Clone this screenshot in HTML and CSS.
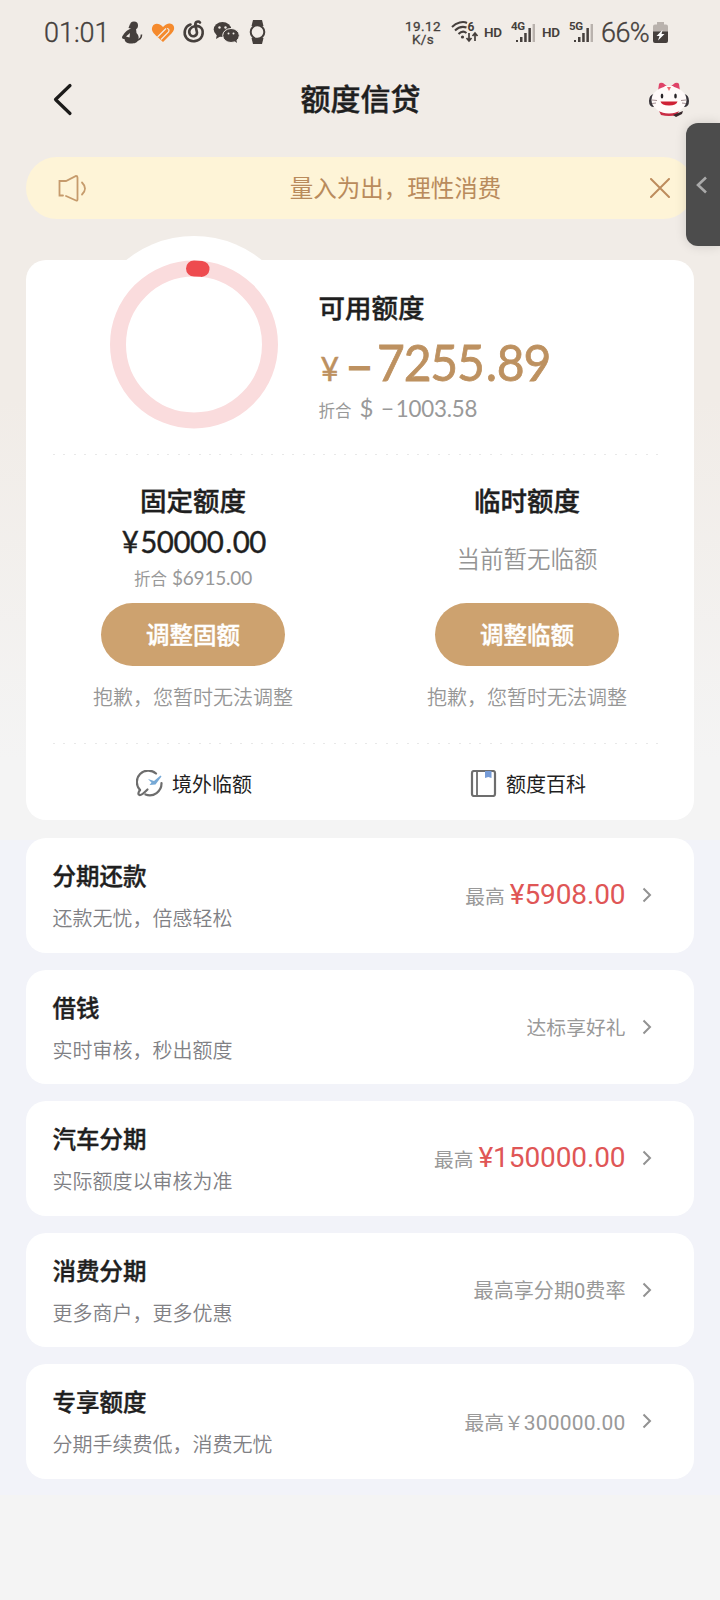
FILE: index.html
```html
<!DOCTYPE html>
<html lang="zh-CN">
<head>
<meta charset="utf-8">
<title>额度信贷</title>
<link rel="stylesheet" href="styles.css">
</head>
<body>
<div class="page">
  <header class="status">
    <span class="clock">01:01</span>
    <svg class="status-apps" width="150" height="26" viewBox="0 0 150 26">
      <g fill="#453f3c">
        <circle cx="15" cy="6.500" r="4"/><path d="M11 5l-1.500 4 4 1z"/>
        <path d="M12 9.500h5l.5 4.500c2 2 2.500 4 2 6c-1 4-4 4.500-7.500 4.500s-6-1-6.500-4.500H5c-2 0-2.500-1.500-1.500-3c2-3 4-6 8.500-7.500z"/>
        <path d="M17 21.500c4-.5 5.500-2.500 5.500-6" fill="none" stroke="#453f3c" stroke-width="1.600"/>
        <path d="M7 17.500l4-3.500-.5 4.500z" fill="#f1ece7"/>
      </g>
      <path d="M44 8C40 3.500 35 4 33.500 7.500C31.500 12 35 14.500 38 17.500L44 23L52.500 14.500C58 9 54 4 50 4.500C47 5 46 6 44 8z" fill="#f58a2d"/>
      <path d="M38.500 18l8.500-8.500M42 20.500l7.500-7.500q1.500-3-1.500-3.500" fill="none" stroke="#f1ece7" stroke-width="1.200"/>
      <g fill="none" stroke="#453f3c" stroke-width="2.600" stroke-linecap="round">
        <path d="M71.500 5.500c-6 2-7.500 9-4 13.500c4 5 13 4 15.500-2c2.500-7-2-11-7-10c-5 1-7 5-5 8.500c2 3 7 2 7-2L76.300 6c-.3-4 3.500-4 4.700-2.500"/>
      </g>
      <g fill="#453f3c">
        <ellipse cx="103.500" cy="10.500" rx="8.800" ry="7.500"/><path d="M98 15l-1 5 5-3z"/>
        <ellipse cx="112" cy="16.500" rx="8.300" ry="7" stroke="#f1ece7"/><path d="M114 21l4 3-1-5z"/>
      </g>
      <g fill="#f1ece7"><circle cx="100.500" cy="8.500" r="1.200"/><circle cx="106.500" cy="8.500" r="1.200"/><circle cx="109.500" cy="14.500" r="1"/><circle cx="114.500" cy="14.500" r="1"/></g>
      <path d="M134 1h9l1.500 6h-12zM132.500 19h12l-1.500 6h-9z" fill="#453f3c"/>
      <circle cx="138.500" cy="13" r="6.800" fill="#f1ece7" stroke="#453f3c" stroke-width="2"/>
    </svg>
    <span class="speed"><span>19.12</span><span>K/s</span></span>
    <svg class="wifi" width="28" height="24" viewBox="0 0 28 24">
      <g fill="none" stroke="#453f3c" stroke-width="2">
        <path d="M1 7c4.500-4.500 11-6 15-4M4 10.500c3-3 7-4.500 11.500-3M7.500 14c2.500-2.500 5.500-3 8-1"/>
        <path d="M18 13v8M15.500 18l2.500 3 2.500-3M24 21v-8M21.500 16l2.500-3 2.500 3" stroke-width="1.700"/>
      </g>
      <circle cx="11.500" cy="17" r="1.600" fill="#453f3c"/>
      <text x="16.500" y="10.500" class="wifi-gen">6</text>
    </svg>
    <span class="hd">HD</span>
    <svg class="signal" width="25" height="24" viewBox="0 0 25 24">
      <text x="0" y="9.500" class="net">4G</text>
      <path d="M5 20h2v2H5zM9 17h2.500v5H9zM13.200 13h2.500v9h-2.500zM17.400 8h2.500v14h-2.500z" fill="#453f3c"/><path d="M21.600 4h2.400v18h-2.400z" fill="#b9b2ad"/>
    </svg>
    <span class="hd">HD</span>
    <svg class="signal" width="25" height="24" viewBox="0 0 25 24">
      <text x="0" y="9.500" class="net">5G</text>
      <path d="M5 20h2v2H5zM9 17h2.500v5H9zM13.200 13h2.500v9h-2.500zM17.400 8h2.500v14h-2.500z" fill="#453f3c"/><path d="M21.600 4h2.400v18h-2.400z" fill="#b9b2ad"/>
    </svg>
    <span class="percent">66%</span>
    <svg class="battery" width="15" height="22" viewBox="0 0 15 22">
      <path d="M4 0h7v2.500h2q2 0 2 2V10H0V4.500q0-2 2-2h2z" fill="#b9b2ad"/>
      <path d="M0 9.500h15V19q0 2-2 2H2q-2 0-2-2z" fill="#453f3c"/>
      <path d="M9.500 8L3.500 14h3L5 18.500l6.500-6.500h-3z" fill="#fff"/>
    </svg>
  </header>

  <nav class="nav">
    <svg class="back" width="20" height="34" viewBox="0 0 20 34"><path d="M17 2.500L2.500 16.500l14.500 14" fill="none" stroke="#1c1b1a" stroke-width="3.200" stroke-linecap="round" stroke-linejoin="round"/></svg>
    <h1>额度信贷</h1>
    <svg class="mascot" width="42" height="36" viewBox="0 0 42 36">
      <path d="M6 12q-5 1-5 7t5 6zM36 12q5 1 5 7t-5 6z" fill="#38343a"/>
      <path d="M10 9l1-7q1-2 4-1l5 4zM32 9l-1-7q-1-2-4-1l-5 4z" fill="#df4368"/>
      <path d="M11 29q10 4 20 0l-2 4q-8 2-16 0z" fill="#c92d45"/>
      <path d="M25 33l10-4-1 3-6 3z" fill="#38282c"/>
      <ellipse cx="21" cy="18" rx="17.500" ry="13.500" fill="#fffaf9"/>
      <path d="M14 7l3-3h8l3 3z" fill="#fffaf9"/>
      <path d="M19 5h4l-2 4z" fill="#ed6d70"/>
      <ellipse cx="14" cy="14" rx="1.300" ry="2.500" fill="#282326"/><ellipse cx="27.500" cy="14" rx="1.300" ry="2.500" fill="#282326"/>
      <path d="M12.500 19.500h17q-1 4-8.500 4t-8.500-4z" fill="#cf2034"/>
      <path d="M4 18l5 .5M4 21.500l4-.5M38 18l-5 .5M38 21.500l-4-.5" stroke="#8e7578" stroke-width=".8"/>
    </svg>
  </nav>

  <section class="notice">
    <svg class="speaker" width="29" height="28" viewBox="0 0 29 28"><path d="M5 21.500H1.500V7H8L18 2q1.500 0 1.500 1.500v22q0 1.500-1.500 1L8 22M24 8.500q6 6 0 12" fill="none" stroke="#c69b6c" stroke-width="1.800" stroke-linecap="round"/></svg>
    <span>量入为出，理性消费</span>
    <svg class="close" width="20" height="20" viewBox="0 0 20 20"><path d="M1 1l18 18M19 1L1 19" stroke="#bd8c5d" stroke-width="2" stroke-linecap="round"/></svg>
  </section>

  <section class="quota">
    <div class="summary">
      <svg class="ring" width="216" height="216" viewBox="0 0 216 216">
        <circle cx="108" cy="108" r="108" fill="#fff"/>
        <circle cx="108" cy="108.500" r="76" fill="none" stroke="#fadcdd" stroke-width="16"/>
        <path d="M108 32.500a76 76 0 0 1 7.500.4" fill="none" stroke="#ee4b4f" stroke-width="16" stroke-linecap="round"/>
      </svg>
      <div class="available">
        <h2>可用额度</h2>
        <div class="balance"><span class="yen">¥</span><span class="minus">−</span><span class="digits">7255<span class="point">.</span>89</span></div>
        <div class="usd"><span>折合</span><b>$</b><i><span class="dash">−</span>1003.58</i></div>
      </div>
    </div>
    <div class="dots"></div>
    <div class="split">
      <div class="col">
        <h2>固定额度</h2>
        <div class="fixed-amount">¥<span>50000<span class="point">.</span>00</span></div>
        <div class="fixed-usd"><span>折合</span>$6915.00</div>
        <button class="adjust">调整固额</button>
        <p class="sorry">抱歉，您暂时无法调整</p>
      </div>
      <div class="col">
        <h2>临时额度</h2>
        <div class="none">当前暂无临额</div>
        <button class="adjust">调整临额</button>
        <p class="sorry">抱歉，您暂时无法调整</p>
      </div>
    </div>
    <div class="dots"></div>
    <div class="links">
      <a class="link">
        <svg width="27" height="27" viewBox="0 0 27 27"><g fill="none" stroke="#6d6d6d" stroke-width="2.200" stroke-linecap="round"><path d="M20 3.500A11.500 11.500 0 0 0 4 20M25.500 13A11.800 11.800 0 0 1 9.500 24.500"/><path d="M4 20q-3 4-.5 5q2 .5 8-5.500"/></g><path d="M12 9l6 2 6.500-5.500 1 1-6 8-6 .5 2-2.500z" fill="#76a9d6"/></svg>
        <span>境外临额</span>
      </a>
      <a class="link">
        <svg width="27" height="27" viewBox="0 0 27 27"><rect x="2" y="1" width="23" height="25" rx="2" fill="none" stroke="#6d6d6d" stroke-width="2.200"/><path d="M7 1v25" stroke="#6d6d6d" stroke-width="1.800"/><path d="M15 1h6.500v7l-3.200-1L15 8z" fill="#759bd7"/></svg>
        <span>额度百科</span>
      </a>
    </div>
  </section>

  <main class="products">
    <article class="product"><div class="info"><h3>分期还款</h3><p>还款无忧，倍感轻松</p></div><div class="offer">最高<strong>¥5908.00</strong></div><svg class="arrow" width="10" height="16" viewBox="0 0 10 16"><path d="M1.500 1.500L8 8l-6.500 6.500"/></svg></article>
    <article class="product"><div class="info"><h3>借钱</h3><p>实时审核，秒出额度</p></div><div class="offer">达标享好礼</div><svg class="arrow" width="10" height="16" viewBox="0 0 10 16"><path d="M1.500 1.500L8 8l-6.500 6.500"/></svg></article>
    <article class="product"><div class="info"><h3>汽车分期</h3><p>实际额度以审核为准</p></div><div class="offer">最高<strong>¥150000.00</strong></div><svg class="arrow" width="10" height="16" viewBox="0 0 10 16"><path d="M1.500 1.500L8 8l-6.500 6.500"/></svg></article>
    <article class="product"><div class="info"><h3>消费分期</h3><p>更多商户，更多优惠</p></div><div class="offer wide">最高享分期0费率</div><svg class="arrow" width="10" height="16" viewBox="0 0 10 16"><path d="M1.500 1.500L8 8l-6.500 6.500"/></svg></article>
    <article class="product"><div class="info"><h3>专享额度</h3><p>分期手续费低，消费无忧</p></div><div class="offer">最高￥<em>300000.00</em></div><svg class="arrow" width="10" height="16" viewBox="0 0 10 16"><path d="M1.500 1.500L8 8l-6.500 6.500"/></svg></article>
  </main>

  <aside class="drawer"><svg width="12" height="18" viewBox="0 0 12 18"><path d="M10 1.500L2 9l8 7.500" fill="none" stroke="#aaa" stroke-width="2.600"/></svg></aside>
</div>
</body>
</html>
```
FILE: styles.css
```css
* { box-sizing: border-box; }
body { margin: 0; background: #f4f4f4; font-family: Roboto, "Noto Sans CJK SC", sans-serif; color: #1f1f1f; }
h1, h2, h3, p { margin: 0; font-weight: 500; }
h1, h2, h3 { -webkit-text-stroke: .4px currentColor; }
svg { display: block; flex: none; }
.page { position: relative; width: 720px; height: 1600px; overflow: hidden; background: linear-gradient(#f1ece7 0, #f1ece7 400px, #f4f4f4 760px, #f4f4f4 840px, #f2f3f9 840px, #f2f3f9 1495px, #f4f4f4 1495px); }

.status { display: flex; align-items: center; height: 64px; padding-left: 43px; color: #453f3c; white-space: nowrap; }
.clock { width: 76px; font-size: 27px; line-height: 32px; padding: 2px 0 0 1px; font-weight: 300; -webkit-text-stroke: .35px currentColor; }
.status-apps { margin-right: 135px; }
.speed { display: flex; flex-direction: column; width: 38px; align-items: center; padding-top: 1px; font-size: 13.500px; line-height: 13px; letter-spacing: .4px; font-weight: 400; -webkit-text-stroke: .3px currentColor; }
.wifi { margin-left: 9px; }
.wifi-gen { font-size: 12px; font-weight: 700; fill: #453f3c; }
.net { font-size: 11.500px; font-weight: 700; fill: #453f3c; letter-spacing: -.3px; }
.hd { width: 20px; margin: 0 7px 0 5px; font-size: 13.500px; font-weight: 600; letter-spacing: -.4px; }
.signal + .hd { margin-left: 6px; }
.percent { margin-left: 7px; padding-top: 2px; width: 50px; font-size: 27px; letter-spacing: -.6px; font-weight: 300; -webkit-text-stroke: .35px currentColor; }
.battery { margin-left: 2px; margin-top: 2px; }

.nav { display: flex; align-items: center; height: 72px; padding: 0 30px 0 53px; }
.nav h1 { flex: 1; text-align: center; font-size: 30px; line-height: 44px; }
.notice { display: flex; align-items: center; height: 62px; margin: 21px 26px 0; padding: 0 24px 0 32px; border-radius: 31px; background: #fef4d7; color: #b98b5c; }
.notice span { flex: 1; padding-left: 54px; text-align: center; font-size: 23.500px; line-height: 32px; margin-top: 1px; }

.quota { height: 560px; margin: 41px 26px 0 26px; border-radius: 20px; background: #fff; }
.summary { display: flex; height: 194px; }
.ring { margin: -24px 0 0 59.600px; }
.available { padding: 29px 0 0 16.900px; white-space: nowrap; }
h2 { font-size: 26.500px; line-height: 40px; }
.balance { display: flex; align-items: baseline; height: 66px; line-height: 66px; color: #bd9160; }
.yen { width: 26px; padding-left: 2px; font-family: Lato, sans-serif; font-size: 32px; -webkit-text-stroke: .5px currentColor; }
.minus { width: 33px; font-family: Inter, sans-serif; font-size: 45px; font-weight: 500; line-height: 60px; }
.digits { display: inline-block; transform: scaleX(.95); transform-origin: left; font-family: Lato, sans-serif; font-size: 50.500px; letter-spacing: -1.200px; -webkit-text-stroke: .8px currentColor; }
.point { padding: 0 1px 0 2px; }
.usd { display: flex; align-items: baseline; line-height: 32px; color: #999; font-size: 16.500px; margin-top: -2px; }
.usd b { margin: 0 8px 0 8px; font: 24px Lato, sans-serif; }
.usd i { display: inline-block; transform: scaleX(.95); transform-origin: left; font: 23.500px Lato, sans-serif; letter-spacing: -.200px; }
.dash { margin-right: 2px; }
.dots { height: 1px; margin: 0 27px 0 27px; background: repeating-linear-gradient(90deg, #e8e8e8 0 2px, transparent 2px 10.400px); }
.split { display: grid; grid-template-columns: 1fr 1fr; height: 288px; padding-top: 27px; }
.col { display: flex; flex-direction: column; align-items: center; }
.fixed-amount { height: 41px; transform: scaleX(.95); padding-left: 2px; font: 31px/39px Lato, sans-serif; letter-spacing: -.500px; -webkit-text-stroke: .4px currentColor; }
.fixed-amount > span { padding-left: 2px; }
.fixed-usd { height: 40px; color: #999; font: 19px/30px Lato, sans-serif; letter-spacing: -.2px; }
.fixed-usd span { margin-right: 5px; font: 16.500px "Noto Sans CJK SC", sans-serif; letter-spacing: 0; }
.none { height: 81px; padding-top: 18px; font-size: 23.500px; line-height: 36px; color: #949494; font-weight: 350; font-family: "Noto Sans CJK SC DemiLight", "Noto Sans CJK SC", sans-serif; }
.adjust { width: 184px; height: 63px; padding: 0; border: 0; border-radius: 32px; background: #cda26f; color: #fff; font: 500 23.500px/63px "Noto Sans CJK SC", sans-serif; -webkit-text-stroke: .4px currentColor; }
.sorry, .info p { font-weight: 350; font-family: "Noto Sans CJK SC DemiLight", "Noto Sans CJK SC", sans-serif; }
.sorry { margin-top: 15px; font-size: 20px; line-height: 32px; color: #969696; }
.links { display: grid; grid-template-columns: 1fr 1fr; padding-top: 24px; }
.link { display: flex; align-items: center; justify-content: center; gap: 9px; padding-left: 2px; font-size: 20px; line-height: 28px; }
.link span { margin-top: 3px; }

.products { display: flex; flex-direction: column; gap: 17px; margin: 18px 26px 0; }
.product { display: flex; align-items: center; height: 114.500px; padding: 0 42px 0 26.500px; border-radius: 20px; background: #fff; }
.info { flex: 1; padding-top: 5px; }
.info h3 { font-size: 23.500px; line-height: 38px; }
.info p { margin-top: 3px; font-size: 20px; line-height: 38px; color: #808084; }
.offer { display: flex; align-items: baseline; margin-right: 16.500px; font-size: 19.800px; color: #999; }
.offer.wide { font-size: 20.100px; }
.offer strong { margin-left: 5px; font-size: 28px; line-height: 38px; font-weight: 400; color: #df5656; letter-spacing: -.1px; }
.offer em { font-style: normal; font-size: 21px; letter-spacing: .2px; }
.arrow path { fill: none; stroke: #929292; stroke-width: 2; }

.drawer { position: absolute; right: 0; top: 123px; display: flex; align-items: center; width: 34px; height: 123px; padding-left: 10px; border-radius: 12px 0 0 12px; background: #4c4c4c; box-shadow: 0 0 12px rgba(0,0,0,.14); }
```
